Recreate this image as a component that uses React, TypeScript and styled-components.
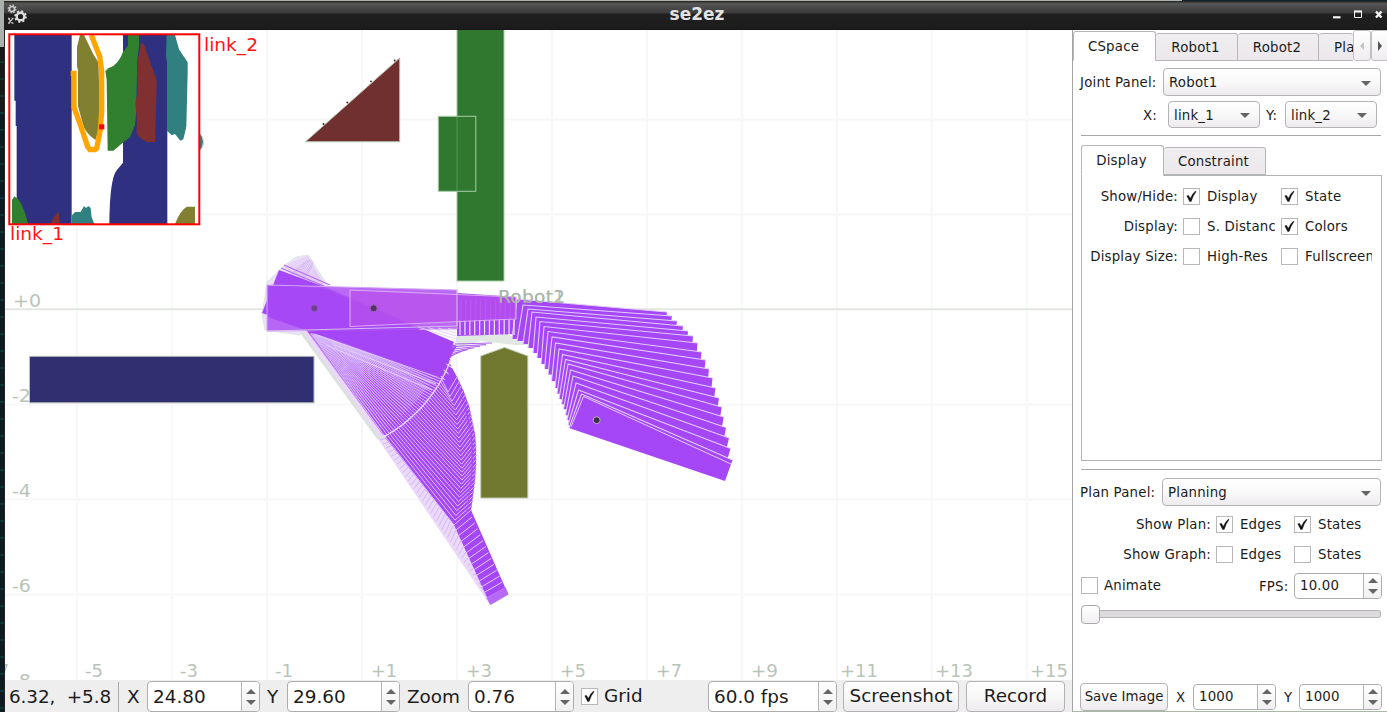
import React from "react";
import styled, { createGlobalStyle } from "styled-components";

const Global = createGlobalStyle`
  html, body { margin: 0; padding: 0; overflow: hidden; }
  * { box-sizing: border-box; }
  body { font-family: "DejaVu Sans", sans-serif; color: #1c1c1c; background: #fff; }
`;

const Desktop = styled.div`
  width: 1387px; height: 712px; overflow: hidden; display: flex; flex-direction: column;
  background: #fff;
`;
const Backdrop = styled.div`
  height: 1px; flex: none; background: linear-gradient(90deg, #adb3ab 0 1182px, #10222c 1182px);
`;
const Screen = styled.div`display: flex; flex: 1; min-height: 0;`;
const Terminal = styled.div`
  width: 4px; flex: none;
  background: linear-gradient(180deg, #aab0ab 0 46px, transparent 46px),
    repeating-linear-gradient(180deg, transparent 0 9px, rgba(20,110,105,.3) 9px 11px, transparent 11px 17px),
    linear-gradient(180deg, #17191b 0 110px, #0d1b22 110px);
`;
const Win = styled.div`flex: 1; min-width: 0; display: flex; flex-direction: column;`;
const TitleBar = styled.div`
  height: 29px; flex: none; display: grid; grid-template-columns: 60px 1fr 60px; align-items: center;
  background: linear-gradient(180deg, #2b2b2b 0 1px, #575757 2px, #3b3b3b 12px, #202020 13px, #1b1b1b 28px, #111 29px);
`;
const Title = styled.div`
  text-align: center; color: #e2e2e2; font-weight: 700; font-size: 17px; line-height: 20px; padding: 0 0 4px 3px;
`;
const Body = styled.div`flex: 1; min-height: 0; display: flex;`;
const Left = styled.div`width: 1068px; flex: none; display: flex; flex-direction: column; border-left: 1px solid #222;`;
const Canvas = styled.svg`display: block; width: 1067px; height: 650px; flex: none;`;

const StatusBar = styled.div`
  height: 32px; display: flex; align-items: center; background: #eeeeef; font-size: 18.4px; line-height: 22px;
  padding-left: 4px; padding-top: 1px; white-space: nowrap;
`;
const Coords = styled.div`width: 102px; overflow: hidden; letter-spacing: -.1px; white-space: pre;`;
const Divider = styled.div`width: 1px; height: 30px; background: #a9a9a9; margin-left: 7px;`;
const Caption = styled.div<{ $w: number; $pad?: number; $lift?: number }>`
  width: ${p => p.$w}px; padding-left: ${p => p.$pad ?? 0}px; padding-bottom: ${p => p.$lift ?? 0}px; flex: none;
`;
const Spacer = styled.div<{ $w: number }>`width: ${p => p.$w}px; flex: none;`;

const Button = styled.button<{ $w: number; $h: number; $lift?: number }>`
  width: ${p => p.$w}px; height: ${p => p.$h}px; flex: none; padding: 0 0 ${p => p.$lift ?? 0}px; font: inherit; color: inherit; white-space: nowrap;
  border: 1px solid #b3b1b3; border-radius: 4px; background: linear-gradient(#fff, #f9f8f9 50%, #eceaec);
`;
const SpinBox = styled.div<{ $w: number; $h: number; $pad: number }>`
  width: ${p => p.$w}px; height: ${p => p.$h}px; flex: none; display: flex; align-items: stretch; overflow: hidden;
  border: 1px solid #aeacae; border-radius: 4px; background: #fff;
  > span { flex: 1; padding-left: ${p => p.$pad}px; display: flex; align-items: center; }
`;
const Steps = styled.div`
  width: 18px; border-left: 1px solid #b4b2b4; display: flex; flex-direction: column; align-items: center; justify-content: center; gap: 6px;
  background: linear-gradient(#fff, #f1f0f1);
`;
const Arrow = styled.i<{ $down?: boolean; $size?: number }>`
  width: 0; height: 0; border: ${p => p.$size ?? 5}px solid transparent;
  ${p => p.$down ? "border-bottom: 0; border-top-color: #656565;" : "border-top: 0; border-bottom-color: #656565;"}
`;
const Spin = ({ w, h, pad = 5, children }: { w: number; h: number; pad?: number; children: React.ReactNode }) => (
  <SpinBox $w={w} $h={h} $pad={pad}><span>{children}</span><Steps><Arrow /><Arrow $down /></Steps></SpinBox>
);

const Box = styled.span`
  width: 17px; height: 17px; flex: none; border: 1px solid #b9b7b9; background: #fff; display: flex;
`;
const Check = ({ on }: { on?: boolean }) => (
  <Box>{on && <svg width="15" height="15" viewBox="0 0 15 15"><path d="M2.8 6.8 L4.6 6.4 L6.3 9.4 Q8.3 4.5 11.6 2 L12 2.8 Q9 6.5 7.2 12.4 L5.6 12.4 Z" fill="#111" stroke="#111" strokeWidth=".4" /></svg>}</Box>
);

const Side = styled.div`
  flex: 1; min-width: 0; border-left: 1px solid #a5a5a5; border-bottom: 1px solid #abb7ab; background: #fff; font-size: 13.33px; line-height: 18px;
  display: flex; flex-direction: column; white-space: nowrap; letter-spacing: .2px;
`;
const Tabs = styled.div<{ $h: number; $indent?: number }>`
  height: ${p => p.$h}px; flex: none; display: flex; align-items: flex-end; margin-left: ${p => p.$indent ?? 0}px;
`;
const Tab = styled.div<{ $w: number; $h: number; $on?: boolean }>`
  width: ${p => p.$w}px; height: ${p => p.$h}px; flex: none; overflow: hidden; display: flex; align-items: center; justify-content: center;
  padding: 2px 2px 0 0;
  border: 1px solid #b7b5b7; border-left-width: ${p => p.$on ? 1 : 0}px; border-radius: 3px 3px 0 0;
  background: ${p => p.$on ? "#fff" : "linear-gradient(#f0eef0, #ece8ec)"};
  border-bottom-color: ${p => p.$on ? "#fff" : "#b7b5b7"};
`;
const Cut = styled(Tab)`justify-content: flex-start; padding-left: 15px; border-right: 0;`;
const Scroll = styled.div<{ $w: number; $dim?: boolean }>`
  width: ${p => p.$w}px; height: 31px; flex: none; display: flex; align-items: center; justify-content: center;
  border: 1px solid #c2c0c2; border-radius: 3px; background: linear-gradient(#fff, #efedef); color: ${p => p.$dim ? "#c4c4c4" : "#555"};
`;
const Row = styled.div<{ $h: number; $top?: number; $left?: number; $drop?: number }>`
  height: ${p => p.$h}px; margin-top: ${p => p.$top ?? 0}px; padding-left: ${p => p.$left ?? 7}px; flex: none; display: flex; align-items: center;
`;
const RowLabel = styled(Caption)`padding-top: 2px;`;
const Select = styled.div<{ $w: number; $h: number }>`
  width: ${p => p.$w}px; height: ${p => p.$h}px; flex: none; display: flex; align-items: center; justify-content: space-between; padding: 2px 9px 0 5px;
  border: 1px solid #b5b3b5; border-radius: 4px; background: linear-gradient(#fff, #faf9fa 50%, #edebed);
`;
const Rule = styled.div<{ $top: number }>`height: 1px; flex: none; margin: ${p => p.$top}px 6px 0 8px; background: #a8a8a8;`;
const Pane = styled.div`
  height: 286px; width: 301px; margin-left: 8px; flex: none; border: 1px solid #b1b5b1; border-top: 0; padding-top: 6px;
  background: linear-gradient(90deg, transparent 0 81px, #b1b5b1 81px) top / 100% 1px no-repeat;
`;
const Options = styled.div<{ $cols: string }>`
  display: grid; grid-template-columns: ${p => p.$cols}; height: 30px; align-items: center;
  > b { font-weight: 400; text-align: right; padding: 2px 5px 0 0; }
  > em { font-style: normal; overflow: hidden; margin-left: 7px; padding-top: 2px; }
`;
const Slider = styled.div`
  height: 18px; margin: 6px 6px 0 8px; display: flex; align-items: center; flex: none;
  &::before { content: ""; width: 17px; height: 17px; border: 1px solid #aaa8aa; border-radius: 4px; background: linear-gradient(#fff, #f1eff1); }
  &::after { content: ""; flex: 1; height: 6px; border: 1px solid #b5b3b5; border-left: 0; border-radius: 0 3px 3px 0; background: #dcdadc; }
`;

type P = [number, number];
const pts = (a: P[]) => a.map(p => p.map(n => n.toFixed(2)).join(",")).join(" ");
/** Samples a polyline at an even parameter t in 0..1. */
const sample = (a: P[], t: number): P => {
  const s = t * (a.length - 1), i = Math.min(a.length - 2, Math.floor(s)), f = s - i;
  return [a[i][0] + (a[i + 1][0] - a[i][0]) * f, a[i][1] + (a[i + 1][1] - a[i][1]) * f];
};
const steps = (n: number) => Array.from({ length: n }, (_, i) => i / (n - 1));
const PURPLE = "#a547f6";
const PALE = "#e2cdfb";

const tipR: P[] = [[667, 312], [672, 316], [677, 321], [683, 326], [688, 331], [693, 336], [697.5, 343], [701.5, 352], [705.5, 360], [709, 369], [712.5, 378], [715.5, 388], [719, 398], [721.7, 407], [723.7, 417], [726, 427.5], [729, 438], [730.5, 448.5], [732.5, 460]];
const elbowR: P[] = [[517, 299], [523, 305], [528, 309], [532, 312], [536, 317], [540, 321.5], [544, 326.5], [548, 331.5], [552, 337], [555.5, 343], [559, 349], [562.5, 354.5], [565.5, 359.5], [568, 364], [570.5, 370], [573, 376], [576, 383], [578.5, 390], [581.5, 394]];
const heelR: P[] = [[512, 339], [517, 341], [523, 344], [528, 348], [533, 353], [537, 358], [541, 364], [544.5, 369], [548, 374.5], [551.5, 381], [555, 388], [557, 393.5], [559, 399], [561.5, 404], [563.5, 409], [565.5, 415], [567, 420], [568, 425], [569, 428]];

const RightSweep = () => (
  <g>
    {tipR.map((e, i) => {
      const v = elbowR[i], l = heelR[i];
      const low: P = [e[0] + (l[0] - v[0]) * 0.6, e[1] + (l[1] - v[1]) * 0.62];
      return <g key={i}>
        <polygon points={pts([l, v, e, low])} fill={PURPLE} />
        <polyline points={pts([l, v, e])} fill="none" stroke={PALE} strokeWidth="1.1" />
      </g>;
    })}
    <polyline points="571,427 583.5,396.5 731,464" fill="none" stroke={PALE} strokeWidth="1" />
  </g>
);

const arc = (deg: number, r = 146): P => [314 + r * Math.cos(deg * Math.PI / 180), 308.5 + r * Math.sin(deg * Math.PI / 180)];
const elbowL: P[] = [[448, 392], [455, 407], [457, 423], [459, 438], [460.5, 453], [462, 467], [462, 480], [460, 494], [457, 509], [454, 525]];
const tipL: P[] = [[457, 377], [464, 392], [469, 406], [472, 420], [475, 434], [476, 449], [476, 464], [475, 479], [473, 495], [471, 510]];

const LowerSweep = () => (
  <g>
    <polygon points="296,322 313,322 390,437 455,525 490,597 490,605 378,439 302,332" fill="#ead9f9" />
    <polygon points={pts([[307, 331], [455, 348], [449, 362], [457, 377], ...tipL, [508, 594], [490, 604], [454, 525], [383, 435]])} fill={PURPLE} />
    {steps(31).map((t, i) => {
      const v = sample(elbowL, t), a = arc(29 + 32 * t), r = sample(tipL, t);
      return <g key={i}>
        <polygon points={pts([[r[0] - 4, r[1] - 1], [r[0] + .8, r[1]], [r[0] - 1.5, r[1] + 3.5], [r[0] - 5, r[1] + 5]])} fill={PURPLE} />
        <polyline points={pts([[311 + 34 * (1 - t), 333 + 8 * (1 - t)], a, v, r])} fill="none" stroke="#dcc0fb" strokeWidth="1" />
      </g>;
    })}
    {steps(30).map((t, i) => (
      <polyline key={i} points={pts([[310 + 34 * (1 - t), 334 + 8 * (1 - t)], arc(29.5 + 32 * t, 138)])} fill="none" stroke="#dcc0fb" strokeWidth=".6" />
    ))}
    {steps(13).map((t, i) => (
      <polyline key={i} points={pts([[456 + 31 * t, 530 + 68 * t], [472 + 33 * t, 517 + 71 * t]])} stroke={PALE} strokeWidth="1" fill="none" />
    ))}
    <polygon points="486.5,598 505.5,587 508.5,594.5 490.5,605" fill="#b56af6" />
    {steps(38).map((t, i) => (
      <polyline key={i} points={pts([[380 + 104 * t, 440 + 151 * t], sample([[387, 438], [421, 482], [455, 528], [486, 596]], t)])} stroke="#cda5f3" strokeWidth=".7" fill="none" />
    ))}
    <polyline points="301,332 378,438 386,436" fill="none" stroke="#dbe1dc" strokeWidth="2.6" />
    <polyline points={pts(steps(24).map(t => arc(4 + 58 * t)))} fill="none" stroke="#e9dcf7" strokeWidth="1.3" />
    {[352, 358, 364, 370, 376].map((y, i) => <path key={y} d={`M${452 - i * 2.8} ${y} l${8 - i} 4`} stroke="#fff" strokeWidth="1" />)}
  </g>
);

const UpperFan = () => (
  <g>
    <polygon points="262,313 265,297 267,282 285,265 296,257 308,255 328,286 300,335 265,330" fill="#ecdffa" stroke="#dce9de" strokeWidth="1" />
    {steps(12).map((t, i) => (
      <path key={i} d={`M${284 + 23 * t} ${266 - 10 * t} L${318 + 7 * t} ${289 - t} M${288 + 18 * t} ${275 - 14 * t} q10 -4 ${14 - 9 * t} 8`} stroke="#d3b2f2" strokeWidth=".6" fill="none" />
    ))}
    <path d="M281 268 L326 287 M284 265 L330 285" stroke="#b46bf5" strokeWidth="1.1" />
  </g>
);

const Robots = () => (
  <g>
    <LowerSweep />
    <UpperFan />
    <polygon points="279,270 330,289 454,342 438,377 262,313" fill={PURPLE} />
    <path d="M314 334 L438 377 M335 345 L436 384 M326 345 L432 390" stroke={PALE} strokeWidth="1.1" fill="none" />
    <polygon points="457,336 505,333 530,345 515,345 480,341 457,348" fill="#e1e8e1" />
    {[0, 1, 2, 3, 4, 5].map(i => <path key={i} d={`M${455 - i} ${344 + i * 2.5} L${492 - i * 6} ${343 + i * 1.6}`} stroke="#ad65ec" strokeWidth="1.1" />)}
    <path d="M457 293 L516 297 L516 334 L457 336 Z" fill={PURPLE} />
    <RightSweep />
    {steps(12).map((t, i) => <g key={i}>
      <path d={`M${461 + t * 54} 300 V320`} stroke="#bd78f4" strokeWidth="1" />
      <path d={`M${460 + t * 54} 320 V335`} stroke="#f0e6fa" strokeWidth="1.2" />
    </g>)}
    <polygon points="267,285 457,290 457,329 267,331" fill="#af54f2" fillOpacity=".88" stroke="#d5a5f5" strokeWidth="1" />
    <polygon points="268,286 290,286 326,289 457,346 438,377 268,317" fill={PURPLE} fillOpacity=".85" />
    <polygon points="350,290 516,297 516,319 350,326.5" fill="#b74fec" fillOpacity=".72" stroke="#dfa9f5" strokeWidth="1.1" />
    {[0, 1, 2, 3].map(i => <path key={i} d={`M${418 + i * 10} ${327 + i * .5} L456 ${339 - i * 3}`} stroke={PALE} strokeWidth=".9" />)}
    <path d="M267 331 L457 326 V290" fill="none" stroke="#d9b9f1" strokeWidth="1" />
    <g strokeWidth="1">
      <circle cx="314.3" cy="308.3" r="3.2" fill="#6e3d91" stroke="#8a55b0" />
      <circle cx="373.7" cy="308.3" r="3.5" fill="#56306c" stroke="#9c69b2" />
      <circle cx="596.7" cy="420.2" r="3.5" fill="#38304a" stroke="#bcb0c4" />
    </g>
  </g>
);

const CSpaceMap = () => (
  <g>
    <path d="M199 132Q208 142 199 152Z" fill="#2f7f80" stroke="#cfe0cf" />
    <rect x="9.5" y="34.5" width="190" height="190" fill="#fff" />
    <g transform="scale(.33333)">
      <path d="M43 105H215V672H50V378H47V302H43Z M369 105H502V672H328Q329 540 349 512L369 488Z" fill="#303080" />
      <path d="M369 155V105H369Z" fill="#fff" />
      <path d="M369 155L384 137V200L340 212L318 208L340 198Q360 182 369 155Z" fill="#308030" />
      <path d="M384 105H417V138L412 180L408 345L405 375L390 412L372 425L340 452H323L320 240L316 212L340 200Q369 174 384 137Z M36 672V600L43 589L56 599Q73 622 84 672Z" fill="#308030" />
      <path d="M422 132Q429 122 435 142L458 207L470 240L466 426H441Q416 415 410 400V350L406 310L412 280V190Z M150 672Q160 650 176 637L179 672Z" fill="#803030" />
      <path d="M500 105H525L537 148L563 187V218L559 380L550 418L541 422L525 402L515 406L501 392V190L498 165Z M216 672V646L225 636H242L252 618L258 624L265 618L272 624L275 652L283 672Z" fill="#308080" />
      <path d="M240 105H252L280 163L296 188V205L300 380L286 420Q255 400 248 370L234 318V210L231 200V140Z M525 672Q540 632 560 620H585V672Z" fill="#808030" />
      <path d="M274 105L299 170L305 212V335L301 390L290 445L285 449H270L263 440L243 380L222 322V220H212" fill="none" stroke="#ffa500" strokeWidth="16" />
      <rect x="297" y="373" width="16" height="15" fill="#f00" />
    </g>
    <rect x="9.3" y="34.3" width="190" height="190" fill="none" stroke="#f00" strokeWidth="2" />
    <g fill="#ff1414" fontSize="18.5">
      <text x="204" y="50.5" textLength="54" lengthAdjust="spacingAndGlyphs">link_2</text>
      <text x="10" y="240" textLength="54" lengthAdjust="spacingAndGlyphs">link_1</text>
    </g>
  </g>
);

const axisX: [string, number, number][] = [["-7", -8, 17], ["-5", 85, 18], ["-3", 180, 18], ["-1", 275, 18], ["+1", 371, 26], ["+3", 466, 26], ["+5", 560, 26], ["+7", 656, 26], ["+9", 751, 27], ["+11", 840, 38], ["+13", 935, 38], ["+15", 1030, 38]];

const Scene = () => (
  <Canvas viewBox="5 30 1067 650" fontFamily="DejaVu Sans, sans-serif">
    <rect x="0" y="30" width="1080" height="650" fill="#fff" />
    <g stroke="#f7f7f7" strokeWidth="2">
      {Array.from({ length: 11 }, (_, i) => <path key={i} d={`M${77.2 + i * 94.95} 30V680`} />)}
      {[119.5, 214.5, 404.5, 499.5, 594.5].map(y => <path key={y} d={`M5 ${y}H1072`} />)}
      <path d="M5 309.3H1072" stroke="#e2e7e2" />
    </g>
    <g fill="#b9c4b9" fontSize="18.5">
      {axisX.map(([s, x, w]) => <text key={s} x={x} y="676.5" textLength={w} lengthAdjust="spacingAndGlyphs">{s}</text>)}
      {["+0", "-2", "-4", "-6", "-8"].map((s, i) => <text key={s} x={i ? 12 : 13} y={306.5 + i * 95} textLength={i ? 19 : 28} lengthAdjust="spacingAndGlyphs">{s}</text>)}
    </g>
    <g strokeWidth="1">
      <rect x="29.5" y="356.3" width="284.5" height="46.5" fill="#302f70" stroke="#b8c0b8" />
      <rect x="457" y="25" width="47" height="256" fill="#307830" stroke="#a9cba9" />
      <rect x="438.3" y="116.3" width="37.5" height="75" fill="#307830" stroke="#a9cba9" />
      <path d="M457 117V191" stroke="#579257" />
      <path d="M305.5 141.7L399.7 58V141.7Z" fill="#703030" stroke="#b6bea9" />
      <g fill="#222"><circle cx="394.7" cy="60.5" r=".9" /><circle cx="371" cy="81.3" r=".9" /><circle cx="347.3" cy="102.5" r=".9" /><circle cx="323.5" cy="124" r=".9" /></g>
      <path d="M480.8 356L504.5 347.5L527.8 356V498H480.8Z" fill="#717830" stroke="#bdc9a9" />
    </g>
    <Robots />
    <g fill="#aab5aa" fontSize="18.5">
      <text x="498" y="302.5" textLength="67">Robot2</text>
      <text x="498" y="302.5" textLength="67" fillOpacity=".8">Robot1</text>
    </g>
    <CSpaceMap />
  </Canvas>
);

const AppIcon = () => (
  <svg width="26" height="24" viewBox="0 0 26 24" fill="none">
    <circle cx="14.5" cy="13.5" r="3.8" stroke="#ddd" strokeWidth="2.4" />
    <circle cx="14.5" cy="13.5" r="5.4" stroke="#ddd" strokeWidth="1.8" strokeDasharray="2.1 2.14" />
    <circle cx="6" cy="6" r="2.5" stroke="#ccc" strokeWidth="1.7" />
    <circle cx="6" cy="6" r="3.8" stroke="#ccc" strokeWidth="1.3" strokeDasharray="1.5 1.48" />
    <path d="M2 15.5h2M5.5 15.5h2M2.8 16l3.6 4M6.4 16l-3.6 4M2 20.2h2M5.5 20.2h2" stroke="#bbb" strokeWidth="1.3" />
  </svg>
);
const IconSlot = styled.div`height: 29px; padding: 2px 0 0 2px;`;
const WindowControls = () => (
  <svg width="60" height="29" viewBox="1327 1 60 29" fill="none" stroke="#f4f4f4">
    <path d="M1333 17.3h7.5" strokeWidth="2.2" />
    <path d="M1354.5 11.3h7v6.2h-7z" /><path d="M1354 11.5h8" strokeWidth="2" />
    <path d="M1376 11.5l5.5 6M1381.5 11.5l-5.5 6" strokeWidth="2.4" />
  </svg>
);
const Combo = ({ w, h, children }: { w: number; h: number; children: string }) => (
  <Select $w={w} $h={h}>{children}<Arrow $down /></Select>
);

export default function App() {
  return (
    <Desktop>
      <Global />
      <Backdrop />
      <Screen>
        <Terminal />
        <Win>
          <TitleBar><IconSlot><AppIcon /></IconSlot><Title>se2ez</Title><WindowControls /></TitleBar>
          <Body>
            <Left>
              <Scene />
              <StatusBar>
                <Coords>{"6.32,  +5.83"}</Coords><Divider />
                <Caption $w={28} $pad={8}>X</Caption><Spin w={113} h={31}>24.80</Spin>
                <Caption $w={27} $pad={7}>Y</Caption><Spin w={113} h={31}>29.60</Spin>
                <Caption $w={68} $pad={7}>Zoom</Caption><Spin w={106} h={31}>0.76</Spin>
                <Spacer $w={7} /><Check on /><Caption $w={110} $pad={6} $lift={2}>Grid</Caption>
                <Spin w={129} h={31}>60.0 fps</Spin>
                <Spacer $w={6} /><Button $w={116} $h={31} $lift={2}>Screenshot</Button>
                <Spacer $w={7} /><Button $w={99} $h={31} $lift={2}>Record</Button>
              </StatusBar>
            </Left>
            <Side>
              <Tabs $h={31}>
                <Tab $w={83} $h={30} $on>CSpace</Tab>
                <Tab $w={82} $h={28}>Robot1</Tab>
                <Tab $w={81} $h={28}>Robot2</Tab>
                <Cut $w={34} $h={28}>Pla</Cut>
                <Scroll $w={18} $dim><svg width="6" height="10"><path d="M5 1L1 5L5 9Z" fill="currentColor" /></svg></Scroll>
                <Scroll $w={18}><svg width="6" height="10"><path d="M1 0L5 5L1 10Z" fill="currentColor" /></svg></Scroll>
              </Tabs>
              <Row $h={28} $top={7}><RowLabel $w={83}>Joint Panel:</RowLabel><Combo w={218} h={28}>Robot1</Combo></Row>
              <Row $h={27} $top={5} $left={70}>
                <RowLabel $w={25}>X:</RowLabel><Combo w={92} h={27}>link_1</Combo>
                <RowLabel $w={25} $pad={6}>Y:</RowLabel><Combo w={92} h={27}>link_2</Combo>
              </Row>
              <Rule $top={7} />
              <Tabs $h={39} $indent={8}><Tab $w={83} $h={30} $on>Display</Tab><Tab $w={102} $h={28}>Constraint</Tab></Tabs>
              <Pane>
                <Options $cols="101px 17px 81px 17px 73px"><b>Show/Hide:</b><Check on /><em>Display</em><Check on /><em>State</em></Options>
                <Options $cols="101px 17px 75px 6px 17px 73px"><b>Display:</b><Check /><em>S. Distance</em><i /><Check on /><em>Colors</em></Options>
                <Options $cols="101px 17px 81px 17px 74px"><b>Display Size:</b><Check /><em>High-Res</em><Check /><em>Fullscreen</em></Options>
              </Pane>
              <Rule $top={8} />
              <Row $h={28} $top={8}><RowLabel $w={82}>Plan Panel:</RowLabel><Combo w={219} h={28}>Planning</Combo></Row>
              <Row $h={60} $top={3} $left={0}>
                <div>
                  <Options $cols="143px 17px 61px 17px 70px"><b>Show Plan:</b><Check on /><em>Edges</em><Check on /><em>States</em></Options>
                  <Options $cols="143px 17px 61px 17px 70px"><b>Show Graph:</b><Check /><em>Edges</em><Check /><em>States</em></Options>
                </div>
              </Row>
              <Row $h={27} $top={3} $left={8}>
                <Check /><Caption $w={161} $pad={6}>Animate</Caption><RowLabel $w={35}>FPS:</RowLabel><Spin w={88} h={26}>10.00</Spin>
              </Row>
              <Slider />
              <Row $h={28} $top={60}>
                <Button $w={88} $h={28}>Save Image</Button>
                <RowLabel $w={25} $pad={8}>X</RowLabel><Spin w={83} h={26}>1000</Spin>
                <RowLabel $w={23} $pad={8}>Y</RowLabel><Spin w={83} h={26}>1000</Spin>
              </Row>
            </Side>
          </Body>
        </Win>
      </Screen>
    </Desktop>
  );
}
